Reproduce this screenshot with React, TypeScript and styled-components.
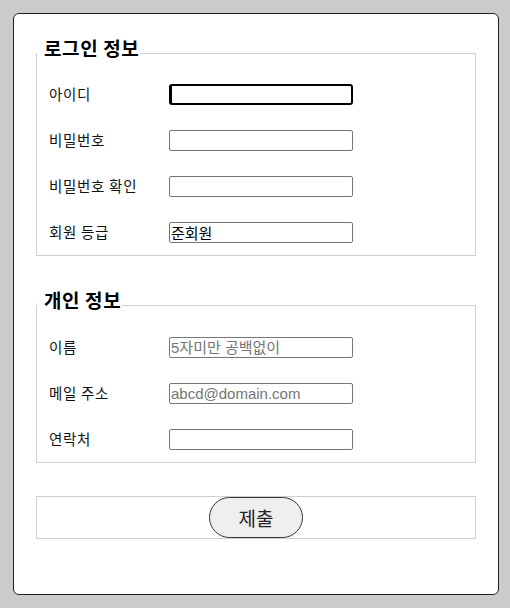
import React from "react";
import styled, { createGlobalStyle } from "styled-components";

const Global = createGlobalStyle`
  html, body { margin: 0; padding: 0; background: #cccccc; }
  body { font-family: "Noto Sans CJK KR", "Noto Sans", sans-serif; color: #111; }
  * { box-sizing: border-box; }
`;

const Card = styled.form`
  margin: 13px;
  width: 486px;
  height: 582px;
  background: #fff;
  border: 1px solid #222;
  border-radius: 6px;
  padding: 24px 22px 0 22px;
  display: flex;
  flex-direction: column;
`;

const Section = styled.fieldset<{ $gap?: number; $top?: number }>`
  margin: 0 0 ${(p) => p.$gap ?? 0}px 0;
  padding: ${(p) => p.$top ?? 16}px 12px 12px 12px;
  width: 440px;
  border: 1px solid #cfcfcf;
  display: flex;
  flex-direction: column;
  gap: 25px;
  min-width: 0;
`;

const Legend = styled.legend`
  margin-left: -12px;
  padding: 0 1px 10px 7px;
  font-size: 19px;
  font-weight: 700;
  letter-spacing: 0.6px;
  line-height: 20px;
  color: #000;
`;

const Row = styled.div`
  display: flex;
  align-items: center;
  height: 21px;
`;

const Label = styled.label`
  width: 120px;
  font-size: 14.5px;
  letter-spacing: 0.7px;
  color: #111;
  margin-top: -2px;
`;

const Input = styled.input<{ $focused?: boolean }>`
  width: 184px;
  height: 21px;
  margin: 0;
  padding: 0 1px;
  font-family: "Liberation Sans", "Noto Sans CJK KR", sans-serif;
  font-size: 15px;
  color: #000;
  background: #fff;
  border: 1px solid #767676;
  border-radius: 2px;
  outline: none;
  ${(p) =>
    p.$focused &&
    `
    border: 2px solid #000;
    border-left-width: 3px;
    border-radius: 3px;
  `}
  &::placeholder { color: #757575; }
`;

const ButtonBox = styled.fieldset`
  margin: 0;
  padding: 0;
  width: 440px;
  height: 43px;
  border: 1px solid #cfcfcf;
  display: flex;
  justify-content: center;
  align-items: center;
`;

const Submit = styled.button`
  width: 94px;
  height: 41px;
  border: 1px solid #333;
  border-radius: 21px;
  background: #efefef;
  font-family: "Noto Sans CJK KR", sans-serif;
  font-size: 19px;
  color: #222;
  padding: 0;
  margin: 0;
`;

export default function App() {
  return (
    <>
      <Global />
      <Card onSubmit={(e) => e.preventDefault()}>
        <Section $gap={34}>
          <Legend>로그인 정보</Legend>
          <Row>
            <Label>아이디</Label>
            <Input $focused />
          </Row>
          <Row>
            <Label>비밀번호</Label>
            <Input type="password" />
          </Row>
          <Row>
            <Label>비밀번호 확인</Label>
            <Input type="password" />
          </Row>
          <Row>
            <Label>회원 등급</Label>
            <Input defaultValue="준회원" readOnly />
          </Row>
        </Section>
        <Section $gap={33} $top={17}>
          <Legend>개인 정보</Legend>
          <Row>
            <Label>이름</Label>
            <Input placeholder="5자미만 공백없이" />
          </Row>
          <Row>
            <Label>메일 주소</Label>
            <Input placeholder="abcd@domain.com" />
          </Row>
          <Row>
            <Label>연락처</Label>
            <Input />
          </Row>
        </Section>
        <ButtonBox>
          <Submit type="submit">제출</Submit>
        </ButtonBox>
      </Card>
    </>
  );
}
